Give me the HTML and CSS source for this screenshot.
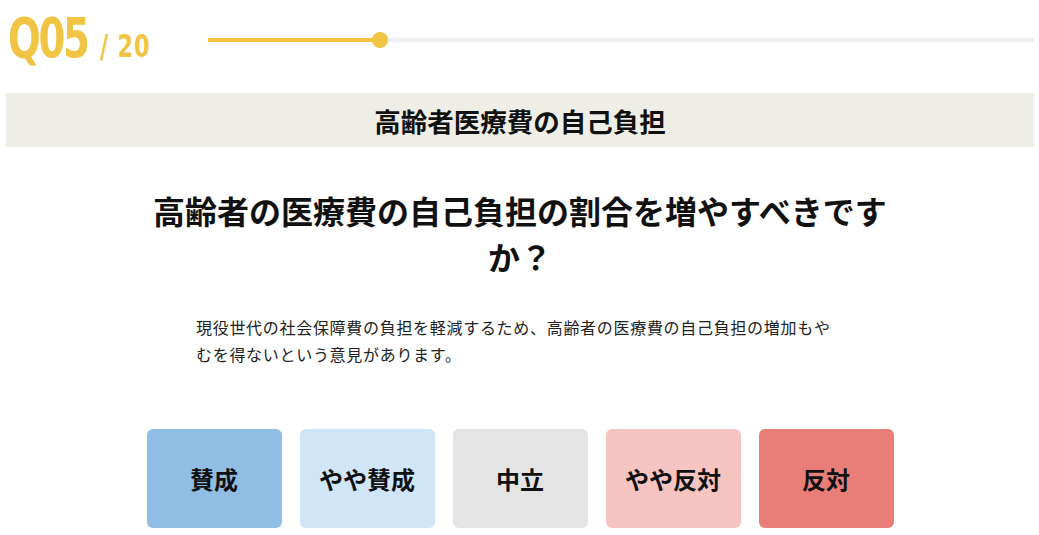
FILE: index.html
```html
<!DOCTYPE html>
<html lang="ja">
<head>
<meta charset="utf-8">
<link rel="stylesheet" href="styles.css">
</head>
<body>
<div class="page">
  <header class="head">
    <div class="qnum"><span class="cur">Q05</span><span class="tot">/ 20</span></div>
    <div class="progress">
      <div class="fill" style="width:172px"><span class="dot"></span></div>
    </div>
  </header>
  <div class="band">高齢者医療費の自己負担</div>
  <h1 class="question">高齢者の医療費の自己負担の割合を増やすべきですか？</h1>
  <p class="desc">現役世代の社会保障費の負担を軽減するため、高齢者の医療費の自己負担の増加もやむを得ないという意見があります。</p>
  <div class="choices">
    <button class="choice c1">賛成</button>
    <button class="choice c2">やや賛成</button>
    <button class="choice c3">中立</button>
    <button class="choice c4">やや反対</button>
    <button class="choice c5">反対</button>
  </div>
</div>
</body>
</html>
```
FILE: styles.css
```css
html, body { margin: 0; padding: 0; background: #fff; }
body { font-family: "Noto Sans CJK JP", "Noto Sans", sans-serif; color: #111; }
.page { padding: 0 5px 0 6px; }
.head { display: flex; align-items: center; height: 80px; }
.qnum { width: 200px; flex: none; display: flex; align-items: baseline; color: #f1c444; font-family: "DejaVu Sans Condensed", "DejaVu Sans", sans-serif; font-weight: bold; padding-left: 2px; margin-top: -4px; }
.cur { font-size: 55px; letter-spacing: -3px; transform: scaleX(0.78); transform-origin: left; display: inline-block; width: 92px; }
.tot { font-size: 32px; transform: scaleX(0.78); transform-origin: left; display: inline-block; letter-spacing: 1px; }
.progress { flex: 1; height: 4px; background: #eeeeee; position: relative; }
.fill { height: 4px; background: #f1c444; position: relative; }
.dot { position: absolute; right: -8px; top: -6px; width: 16px; height: 16px; border-radius: 50%; background: #f1c444; }
.band { background: #efeee6; height: 54px; margin-top: 13px; display: flex; align-items: center; justify-content: center; font-size: 26.5px; font-weight: bold; }
.question { max-width: 740px; margin: 40px auto 0; text-align: center; font-size: 32px; line-height: 46px; font-weight: bold; }
.desc { max-width: 648px; margin: 35px auto 0; font-size: 16px; letter-spacing: 0.7px; line-height: 27px; color: #222; }
.choices { display: flex; justify-content: center; gap: 18px; margin-top: 61px; }
.choice { width: 135px; height: 99px; border: none; border-radius: 6px; font-family: inherit; font-size: 24px; font-weight: bold; color: #111; }
.c1 { background: #8fbde3; }
.c2 { background: #d0e5f8; }
.c3 { background: #e4e4e4; }
.c4 { background: #f6c5c2; }
.c5 { background: #e97d78; }
```
